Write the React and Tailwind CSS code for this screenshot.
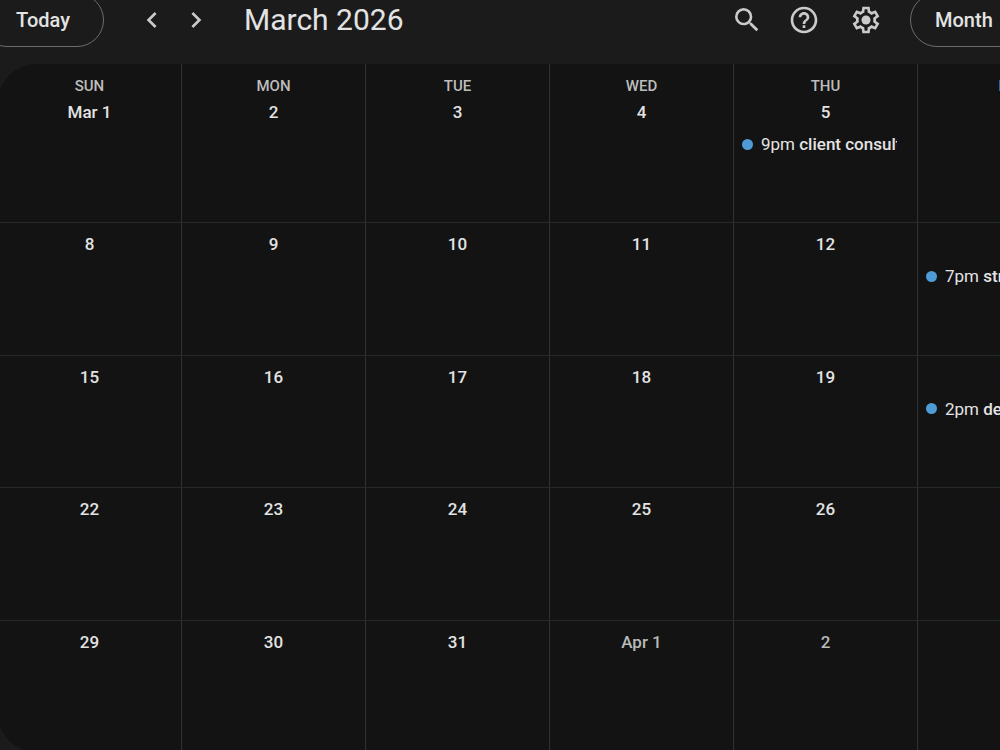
import { MdChevronLeft, MdChevronRight, MdHelpOutline, MdSearch } from 'react-icons/md';
import clsx from 'clsx';

const weekdays = ['Sun', 'Mon', 'Tue', 'Wed', 'Thu', 'Fri'];

const weeks = [
  [
    { label: 'Mar 1' },
    { label: '2' },
    { label: '3' },
    { label: '4' },
    { label: '5', event: { time: '9pm', title: 'client consultation' } },
    { label: '6' },
  ],
  [
    { label: '8' },
    { label: '9' },
    { label: '10' },
    { label: '11' },
    { label: '12' },
    { label: '13', event: { time: '7pm', title: 'strategy call' } },
  ],
  [
    { label: '15' },
    { label: '16' },
    { label: '17' },
    { label: '18' },
    { label: '19' },
    { label: '20', event: { time: '2pm', title: 'design review' } },
  ],
  [
    { label: '22' },
    { label: '23' },
    { label: '24' },
    { label: '25' },
    { label: '26' },
    { label: '27' },
  ],
  [
    { label: '29' },
    { label: '30' },
    { label: '31' },
    { label: 'Apr 1', outside: true },
    { label: '2', outside: true },
    { label: '3', outside: true },
  ],
];

// Outlined cog with a solid hub
const SettingsIcon = () => (
  <svg viewBox="0 0 24 24" className="size-8" fill="currentColor" aria-hidden="true">
    <path d="m9.25 22-.4-3.2q-.325-.125-.612-.3-.288-.175-.563-.375L4.7 19.375l-2.75-4.75 2.575-1.95Q4.5 12.5 4.5 12.337v-.675q0-.162.025-.337L1.95 9.375l2.75-4.75 2.975 1.25q.275-.2.575-.375.3-.175.6-.3l.4-3.2h5.5l.4 3.2q.325.125.613.3.287.175.562.375l2.975-1.25 2.75 4.75-2.575 1.95q.025.175.025.337v.675q0 .163-.05.338l2.575 1.95-2.75 4.75-2.95-1.25q-.275.2-.575.375-.3.175-.6.3l-.4 3.2Zm1.75-2h1.975l.35-2.65q.775-.2 1.438-.588.662-.387 1.212-.937l2.475 1.025.975-1.7-2.15-1.625q.125-.35.175-.738.05-.387.05-.787t-.05-.788q-.05-.387-.175-.737l2.15-1.625-.975-1.7-2.475 1.05q-.55-.575-1.212-.963-.663-.387-1.438-.587L13 4h-1.975l-.35 2.65q-.775.2-1.437.587-.663.388-1.213.938L5.55 7.15l-.975 1.7 2.15 1.6q-.125.375-.175.75-.05.375-.05.8 0 .4.05.775.05.375.175.75l-2.15 1.625.975 1.7 2.475-1.05q.55.575 1.213.962.662.388 1.437.588Z" />
    <circle cx="12" cy="12" r="3.4" />
  </svg>
);

const IconButton = ({ label, className, children }) => (
  <button type="button" aria-label={label} className={clsx('flex items-center justify-center', className)}>
    {children}
  </button>
);

const Toolbar = () => (
  <header className="-mr-14 -ml-5 flex h-16 shrink-0 items-start text-[#c9cac9]">
    <div className="-mt-[7px] flex h-[54px] flex-1 items-center">
      <button
        type="button"
        className="h-full w-[124px] rounded-full border border-[#6b6c6b] pl-0.5 text-xl font-medium text-[#e3e3e3]"
      >
        Today
      </button>
      <IconButton label="Previous month" className="ml-[26px] w-11">
        <MdChevronLeft className="size-8" />
      </IconButton>
      <IconButton label="Next month" className="w-11">
        <MdChevronRight className="size-8" />
      </IconButton>
      <h1 className="ml-[26px] text-[30px] leading-9 whitespace-nowrap text-[#e3e3e3]">March 2026</h1>
      <div className="ml-auto flex items-center">
        <IconButton label="Search" className="w-[54px]">
          <MdSearch className="size-8" />
        </IconButton>
        <IconButton label="Help" className="w-15">
          <MdHelpOutline className="size-8" />
        </IconButton>
        <IconButton label="Settings" className="w-16">
          <SettingsIcon />
        </IconButton>
      </div>
      <button
        type="button"
        aria-haspopup="menu"
        className="ml-3 h-full w-[146px] rounded-full border border-[#6b6c6b] pl-6 text-left text-xl font-medium text-[#e3e3e3]"
      >
        Month
      </button>
    </div>
  </header>
);

const EventChip = ({ time, title }) => (
  <button
    type="button"
    className="mt-2 mr-5 ml-2 flex h-6 min-w-0 items-center overflow-hidden text-[17px] leading-6 text-[#e3e3e3]"
  >
    <span className="mr-2 size-[11px] shrink-0 rounded-full bg-[#4f9bd5]" />
    <span className="overflow-hidden whitespace-nowrap">
      {time} <span className="font-medium">{title}</span>
    </span>
  </button>
);

const DayCell = ({ label, outside, event }) => (
  <td className="border-r border-b border-r-[#303131] border-b-[#282929] p-0 pt-[9px] align-top">
    <div
      className={clsx(
        'text-center text-[17px] leading-6 font-medium',
        outside ? 'text-[#b9bab9]' : 'text-[#e3e3e3]'
      )}
    >
      {label}
    </div>
    {event && (
      <div className="flex overflow-hidden">
        <EventChip {...event} />
      </div>
    )}
  </td>
);

const MonthGrid = () => (
  <main className="-mr-[12%] -mb-0.5 -ml-0.5 flex-1 overflow-hidden rounded-l-[38px] bg-[#131313]">
    <table className="h-[calc(100vh-61px)] w-[110.4vw] table-fixed border-separate border-spacing-0">
      <thead>
        <tr className="h-[27px]">
          {weekdays.map((day) => (
            <th
              key={day}
              scope="col"
              className="border-r border-[#303131] p-0 pt-3 align-top text-[15px] leading-5 font-medium text-[#bcbdbc] uppercase"
            >
              <div className="h-[15px]">{day}</div>
            </th>
          ))}
        </tr>
      </thead>
      <tbody>
        {weeks.map((week) => (
          <tr key={week[0].label} className="h-1/5">
            {week.map((day) => (
              <DayCell key={day.label} {...day} />
            ))}
          </tr>
        ))}
      </tbody>
    </table>
  </main>
);

export default function App() {
  return (
    <div className="flex h-screen flex-col overflow-hidden bg-[#1b1b1b] font-['Roboto','Liberation_Sans',sans-serif]">
      <Toolbar />
      <MonthGrid />
    </div>
  );
}
